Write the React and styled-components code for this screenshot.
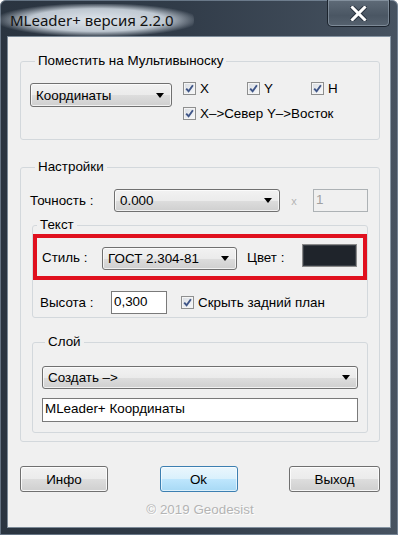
import React from "react";
import styled, { createGlobalStyle } from "styled-components";

const GlobalStyle = createGlobalStyle`
  html, body {
    margin: 0;
    padding: 0;
    background: #ffffff;
  }
  body {
    font-family: "Liberation Sans", Arial, sans-serif;
    font-size: 13.4px;
    color: #000;
  }
`;

function CheckBox() {
  return (
    <Box>
      <svg width="9" height="9" viewBox="0 0 9 9">
        <path d="M1.2 4.6 L3.6 7.2 L7.9 1.3" fill="none" stroke="#3f5587" strokeWidth="1.9" />
      </svg>
    </Box>
  );
}

function Check({ label, width }) {
  return (
    <CheckItem $w={width}>
      <CheckBox />
      <span>{label}</span>
    </CheckItem>
  );
}

function Combo({ value, width, height = 23, className }) {
  return (
    <ComboBox $w={width} $h={height} className={className}>
      <span>{value}</span>
      <Arrow />
    </ComboBox>
  );
}

export default function App() {
  return (
    <>
      <GlobalStyle />
      <Window>
        <TitleBar>
          <Title>MLeader+ версия 2.2.0</Title>
          <CloseButton>
            <svg width="17" height="15" viewBox="0 0 17 15">
              <path
                d="M2.5 1.5 L14.5 13.5 M14.5 1.5 L2.5 13.5"
                stroke="#2a3440"
                strokeWidth="5"
                strokeLinecap="square"
              />
              <path
                d="M2.5 1.5 L14.5 13.5 M14.5 1.5 L2.5 13.5"
                stroke="#ffffff"
                strokeWidth="3"
                strokeLinecap="square"
              />
            </svg>
          </CloseButton>
        </TitleBar>

        <Client>
          <Group $mt={16} $pad="14px 0 19px 9px">
            <Legend $ml={5}>Поместить на Мультивыноску</Legend>
            <Row>
              <Combo value="Координаты" width={142} height={24} />
              <CheckColumn>
                <CheckRow>
                  <Check label="X" width={64} />
                  <Check label="Y" width={64} />
                  <Check label="H" />
                </CheckRow>
                <CheckRow>
                  <Check label="X–>Север Y–>Восток" />
                </CheckRow>
              </CheckColumn>
            </Row>
          </Group>

          <Group $mt={19} $pad="14px 11px 8px 9px">
            <Legend $ml={5}>Настройки</Legend>
            <FieldRow>
              <Label $w={84}>Точность :</Label>
              <Combo value="0.000" width={166} />
              <Times>x</Times>
              <TextBox $w={55} $disabled>1</TextBox>
            </FieldRow>

            <SubGroup $mt={5} $pad="0 0 3px 0">
              <Legend $ml={4}>Текст</Legend>
              <RedBox>
                <Label $w={60}>Стиль :</Label>
                <StyleCombo value="ГОСТ 2.304-81" width={135} />
                <Label $w={55} $ml={10}>
                  Цвет :
                </Label>
                <ColorSwatch />
              </RedBox>
              <HeightRow>
                <Label $w={71}>Высота :</Label>
                <TextBox $w={56}>0,300</TextBox>
                <HideCheck>
                  <Check label="Скрыть задний план" />
                </HideCheck>
              </HeightRow>
            </SubGroup>

            <SubGroup $mt={16} $pad="16px 9px 10px 9px">
              <Legend $ml={3}>Слой</Legend>
              <Combo value="Создать –>" height={23} />
              <TextBox $h={24} $mt={9}>
                MLeader+ Координаты
              </TextBox>
            </SubGroup>
          </Group>

          <ButtonRow>
            <Button $w={88}>Инфо</Button>
            <Button $w={78} $primary>
              Ok
            </Button>
            <Button $w={91}>Выход</Button>
          </ButtonRow>
          <Copyright>© 2019 Geodesist</Copyright>
        </Client>
      </Window>
    </>
  );
}

const Window = styled.div`
  width: 398px;
  height: 535px;
  box-sizing: border-box;
  display: flex;
  flex-direction: column;
  background: linear-gradient(90deg, #2a3440 0%, #313c49 45%, #475361 100%);
  border-radius: 6px 6px 0 0;
  box-shadow: inset 0 0 0 1px rgba(170, 190, 210, 0.45);
  overflow: hidden;
`;

const TitleBar = styled.div`
  height: 37px;
  display: flex;
  align-items: flex-start;
  flex-shrink: 0;
`;

const Title = styled.div`
  margin-top: 4px;
  padding: 6px 20px 6px 10px;
  font-family: "Noto Sans", "Open Sans", sans-serif;
  font-size: 15px;
  line-height: 20px;
  color: #111;
  background: radial-gradient(
    ellipse at 50% 50%,
    rgba(228, 234, 241, 0.97) 0%,
    rgba(215, 224, 233, 0.85) 50%,
    rgba(200, 210, 222, 0) 75%
  );
  border-radius: 20px;
`;

const CloseButton = styled.div`
  margin-left: auto;
  margin-right: 8px;
  width: 63px;
  height: 27px;
  box-sizing: border-box;
  display: flex;
  align-items: center;
  justify-content: center;
  border: 1px solid #1c242e;
  border-top: none;
  border-radius: 0 0 5px 5px;
  background: linear-gradient(#5f6b78, #4a5663 60%, #56626f);
  box-shadow: inset 0 0 0 1px rgba(200, 215, 230, 0.35);
`;

const Client = styled.div`
  flex: 1;
  margin: 0 8px 8px;
  padding: 0 10px 0 12px;
  background: #f0f0f0;
  display: flex;
  flex-direction: column;
  outline: 1px solid rgba(190, 205, 220, 0.55);
`;

const Group = styled.fieldset`
  margin: ${(p) => p.$mt}px 0 0 0;
  padding: ${(p) => p.$pad};
  border: 1px solid #d3d8dc;
  border-radius: 3px;
  min-width: 0;
`;

const SubGroup = styled(Group)`
  margin: ${(p) => p.$mt}px 0 0 2px;
  display: flex;
  flex-direction: column;
`;

const Legend = styled.legend`
  margin-left: ${(p) => p.$ml}px;
  padding: 0 3px;
  line-height: 16px;
`;

const Row = styled.div`
  display: flex;
  align-items: flex-start;
`;

const CheckColumn = styled.div`
  margin-left: 11px;
  margin-top: -1px;
  display: flex;
  flex-direction: column;
  gap: 12px;
`;

const CheckRow = styled.div`
  display: flex;
`;

const CheckItem = styled.div`
  width: ${(p) => (p.$w ? `${p.$w}px` : "auto")};
  height: 13px;
  display: flex;
  align-items: center;
  gap: 4px;
  line-height: 13px;
  white-space: nowrap;
`;

const Box = styled.span`
  width: 13px;
  height: 13px;
  box-sizing: border-box;
  flex-shrink: 0;
  display: flex;
  align-items: center;
  justify-content: center;
  border: 1px solid #8e8f8f;
  background: linear-gradient(135deg, #d8dce2, #f8f9fa);
  box-shadow: inset 0 0 0 1px #f4f4f4;
`;

const ComboBox = styled.div`
  width: ${(p) => (p.$w ? `${p.$w}px` : "100%")};
  height: ${(p) => p.$h}px;
  box-sizing: border-box;
  flex-shrink: 0;
  display: flex;
  align-items: center;
  justify-content: space-between;
  padding: 0 7px 0 5px;
  border: 1px solid #707070;
  border-radius: 3px;
  background: linear-gradient(#f2f2f2 0%, #ebebeb 50%, #dddddd 51%, #cfcfcf 100%);
  box-shadow: inset 0 0 0 1px rgba(255, 255, 255, 0.7);
  white-space: nowrap;
`;

const Arrow = styled.span`
  width: 0;
  height: 0;
  border-left: 4px solid transparent;
  border-right: 4px solid transparent;
  border-top: 5px solid #000;
`;

const FieldRow = styled.div`
  display: flex;
  align-items: center;
  height: 23px;
`;

const Label = styled.span`
  width: ${(p) => p.$w}px;
  margin-left: ${(p) => p.$ml || 0}px;
  flex-shrink: 0;
  white-space: nowrap;
`;

const Times = styled.span`
  width: 33px;
  padding-right: 5px;
  box-sizing: border-box;
  text-align: center;
  color: #b4b4b4;
  font-size: 11px;
`;

const TextBox = styled.div`
  width: ${(p) => (p.$w ? `${p.$w}px` : "100%")};
  height: ${(p) => p.$h || 23}px;
  margin-top: ${(p) => p.$mt || 0}px;
  box-sizing: border-box;
  flex-shrink: 0;
  padding: 2px 2px;
  line-height: 16px;
  border: 1px solid ${(p) => (p.$disabled ? "#adb2b5" : "#7a7a7a")};
  background: ${(p) => (p.$disabled ? "#f0f0f0" : "#ffffff")};
  color: ${(p) => (p.$disabled ? "#a0a0a0" : "#000")};
  white-space: nowrap;
`;

const RedBox = styled.div`
  margin-top: 1px;
  height: 46px;
  box-sizing: border-box;
  border: 4px solid #e0101e;
  padding-left: 5px;
  display: flex;
  align-items: center;
`;

const StyleCombo = styled(Combo)`
  margin-top: 3px;
`;

const ColorSwatch = styled.div`
  width: 55px;
  height: 23px;
  margin-bottom: 3px;
  box-sizing: border-box;
  border: 1px solid #8a8a8a;
  background: #1f242b;
  box-shadow: inset 0 0 0 1px #3a3f46;
`;

const HeightRow = styled.div`
  margin-top: 11px;
  padding-left: 7px;
  height: 23px;
  display: flex;
  align-items: center;
`;

const HideCheck = styled.div`
  margin-left: 14px;
`;

const ButtonRow = styled.div`
  margin-top: 24px;
  display: flex;
  justify-content: space-between;
`;

const Button = styled.div`
  width: ${(p) => p.$w}px;
  height: 26px;
  box-sizing: border-box;
  display: flex;
  align-items: center;
  justify-content: center;
  border: 1px solid ${(p) => (p.$primary ? "#3c7fb1" : "#707070")};
  border-radius: 3px;
  background: ${(p) =>
    p.$primary
      ? "linear-gradient(#eaf6fd 0%, #d9f0fc 50%, #bee6fd 51%, #a7d9f5 100%)"
      : "linear-gradient(#f2f2f2 0%, #ebebeb 50%, #dddddd 51%, #cfcfcf 100%)"};
  box-shadow: inset 0 0 0 1px ${(p) => (p.$primary ? "rgba(255,255,255,0.6)" : "rgba(255,255,255,0.8)")};
`;

const Copyright = styled.div`
  margin-top: 10px;
  text-align: center;
  color: #b4b4b4;
  text-shadow: 1px 1px 0 #ffffff;
`;
